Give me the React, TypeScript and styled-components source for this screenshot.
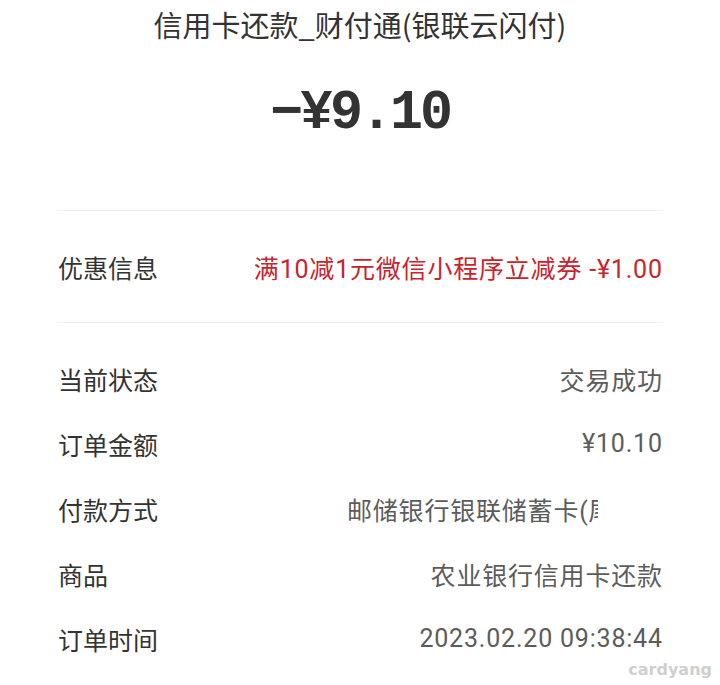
import React from 'react'
import styled, { createGlobalStyle } from 'styled-components'

const GlobalStyle = createGlobalStyle`
  html, body {
    margin: 0;
    padding: 0;
    background: #ffffff;
  }
  body {
    font-family: Roboto, "Noto Sans CJK SC", sans-serif;
  }
`

const rows = [
  { label: '当前状态', value: '交易成功' },
  { label: '订单金额', value: '¥10.10' },
  { label: '付款方式', value: '邮储银行银联储蓄卡(尾号', clip: true },
  { label: '商品', value: '农业银行信用卡还款' },
  { label: '订单时间', value: '2023.02.20 09:38:44' },
]

function App() {
  return (
    <Page>
      <GlobalStyle />
      <Title>信用卡还款_财付通(银联云闪付)</Title>
      <Amount>−¥9.10</Amount>
      <Divider />
      <PromoRow>
        <Label>优惠信息</Label>
        <Value $red>满10减1元微信小程序立减券 -¥1.00</Value>
      </PromoRow>
      <Divider />
      <List>
        {rows.map((r) => (
          <Row key={r.label}>
            <Label>{r.label}</Label>
            {r.clip ? (
              <ClipValue>
                <Value>{r.value}</Value>
              </ClipValue>
            ) : (
              <Value>{r.value}</Value>
            )}
          </Row>
        ))}
      </List>
      <Watermark>cardyang</Watermark>
    </Page>
  )
}

const Page = styled.div`
  position: relative;
  width: 720px;
  height: 685px;
  padding: 0 58px;
  box-sizing: border-box;
  overflow: hidden;
  display: flex;
  flex-direction: column;
`

const Title = styled.div`
  margin-top: 4px;
  height: 40px;
  line-height: 40px;
  text-align: center;
  font-family: "Noto Sans CJK SC", sans-serif;
  font-size: 29px;
  color: #333333;
`

const Amount = styled.div`
  margin-top: 42px;
  margin-bottom: 68px;
  height: 56px;
  line-height: 56px;
  text-align: center;
  font-family: "Liberation Mono", monospace;
  font-weight: 700;
  font-size: 55px;
  letter-spacing: -3px;
  color: #333333;
`

const Divider = styled.div`
  height: 1px;
  background: #f0f0f0;
  flex-shrink: 0;
`

const PromoRow = styled.div`
  height: 111px;
  display: flex;
  align-items: center;
  justify-content: space-between;
`

const List = styled.div`
  padding-top: 23px;
  display: flex;
  flex-direction: column;
`

const Row = styled.div`
  height: 65px;
  display: flex;
  align-items: center;
  justify-content: space-between;
`

const Label = styled.span`
  font-family: Roboto, "Noto Sans CJK SC", sans-serif;
  font-size: 25px;
  color: #333333;
`

const Value = styled.span<{ $red?: boolean }>`
  font-family: Roboto, "Noto Sans CJK SC", sans-serif;
  font-size: 25px;
  letter-spacing: 0.8px;
  margin-right: -0.8px;
  white-space: nowrap;
  color: ${(p) => (p.$red ? '#c9232e' : '#5c5c5c')};
`

const ClipValue = styled.div`
  width: 251px;
  margin-right: 64px;
  overflow: hidden;
  white-space: nowrap;
`

const Watermark = styled.div`
  position: absolute;
  right: 8px;
  bottom: 6px;
  font-family: "DejaVu Sans", sans-serif;
  font-weight: 700;
  font-size: 16px;
  color: #cfcfcf;
`

export default App
